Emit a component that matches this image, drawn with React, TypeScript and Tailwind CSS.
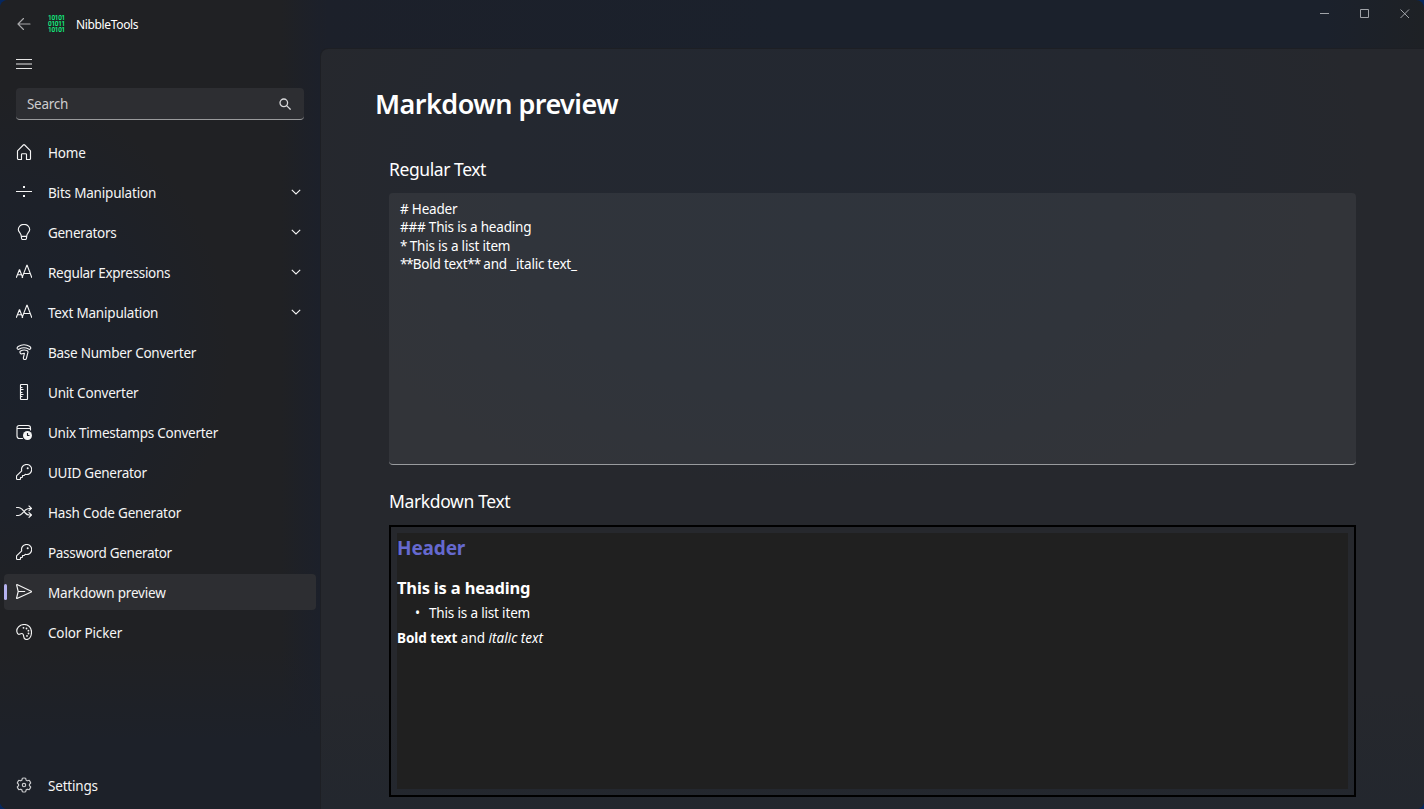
import React from "react";

type IconProps = { children: React.ReactNode; className?: string };

function Glyph({ children, className = "" }: IconProps) {
  return (
    <svg
      viewBox="0 0 16 16"
      className={`size-4 shrink-0 ${className}`}
      fill="none"
      stroke="currentColor"
      strokeWidth="1.15"
      strokeLinejoin="round"
      strokeLinecap="round"
    >
      {children}
    </svg>
  );
}

const HomeIcon = () => (
  <Glyph>
    <path d="M1.500 6.800 7.300 1a1 1 0 0 1 1.400 0l5.800 5.800v7.700a1 1 0 0 1-1 1h-3v-5a.8.8 0 0 0-.8-.8H6.300a.8.8 0 0 0-.8.8v5h-3a1 1 0 0 1-1-1z" />
  </Glyph>
);
const DivideIcon = () => (
  <Glyph>
    <path d="M0 7.500h16" strokeLinecap="butt" strokeWidth="1" />
    <path d="M7 2h2v2H7zM7 11h2v2H7z" fill="currentColor" stroke="none" />
  </Glyph>
);
const BulbIcon = () => (
  <Glyph>
    <path d="M5.300 12.300c0-1.600-.6-2.500-1.400-3.500C3 7.800 2.300 7.100 2.300 5.600a5.700 5.300 0 0 1 11.400 0c0 1.500-.7 2.200-1.600 3.200-.8 1-1.400 1.900-1.400 3.500zM5.300 12.300l.3 2.200a1.200 1.200 0 0 0 1.200 1h2.400a1.200 1.200 0 0 0 1.200-1l.3-2.200" />
  </Glyph>
);
const FontIcon = () => (
  <Glyph>
    <path
      d="M.4 13.400 3.500 5.500l3.100 7.900M1.500 10.700h4M6.200 13.400 11 .9l4.700 12.500M7.800 9.500h6.300"
      strokeLinejoin="bevel"
    />
  </Glyph>
);
const RadarIcon = () => (
  <Glyph>
    <path d="M1.300 4.800c-.4-.9 0-1.600.9-2.200 3.400-2.200 8.200-2.200 11.600 0 .9.600 1.200 1.400.700 2.200-.4.700-1.200.800-1.900.300-2.900-1.700-6.400-1.700-9.200 0-.8.500-1.700.4-2.100-.3z" />
    <path d="M4.200 8.900c-.5-.7-.3-1.500.4-1.900 2-1.100 4.200-1.300 6.300-.5.900.4 1.200 1 1 1.900l-1.500 6c-.3 1.200-1.700 1.400-2.500.8-.5-.4-.6-.9-.5-1.500l1-4.400c-.8-.1-1.400 0-2.200.4-.7.300-1.600.1-2-.8z" />
  </Glyph>
);
const RulerIcon = () => (
  <Glyph>
    <rect x="4.500" y=".5" width="7" height="15" rx=".7" />
    <path d="M4.500 3.500h2M4.500 5.500h3M4.500 8.500h2M4.500 10.500h3M4.500 12.500h2" strokeLinecap="butt" strokeWidth="1" />
  </Glyph>
);
const CalendarIcon = () => (
  <Glyph>
    <path d="M6.500 14.500H3.500A2.500 2.500 0 0 1 1 12V3.500A2 2 0 0 1 3 1.500h9a2.500 2.500 0 0 1 2.500 2.500v2M1 4.500h13.500" />
    <circle cx="11.500" cy="11.500" r="4.500" fill="currentColor" stroke="none" />
    <path d="M11.500 9v2.500h2" stroke="#1d2129" strokeLinecap="butt" />
  </Glyph>
);
const KeyIcon = () => (
  <Glyph>
    <path d="M10.500.5a5 5 0 0 0-4.800 6.300L.8 11.700a1 1 0 0 0-.3.700v2.100a1 1 0 0 0 1 1h2.100a1 1 0 0 0 .9-.9v-1.100h1.200a.8.800 0 0 0 .8-.8V11.500h1.200a1 1 0 0 0 .8-.4l.8-.8A5 5 0 1 0 10.500.500z" />
    <circle cx="11.700" cy="4.300" r="1" fill="currentColor" stroke="none" />
  </Glyph>
);
const ShuffleIcon = () => (
  <Glyph>
    <path d="M.5 3.500h1.800c1.600 0 2.500.6 3.700 1.700L9.300 9c1.100 1.300 2.200 2 3.900 2h2.300M.5 11.500h1.800c1.600 0 2.500-.6 3.700-1.900l3.300-3.400c1.200-1.200 2.200-1.700 3.900-1.700h2.300M13 2l2.500 2.300L13 6.600M13 8.700l2.500 2.300-2.500 2.300" />
  </Glyph>
);
const SendIcon = () => (
  <Glyph>
    <path d="M2.200 7.500.6.900a.3.300 0 0 1 .4-.3l14.300 6.600a.4.400 0 0 1 0 .7L1 14.500a.3.300 0 0 1-.4-.4zM2.200 7.500h6.500" />
  </Glyph>
);
const PaletteIcon = () => (
  <Glyph>
    <path d="M1 8.200C-.1 4.200 3.700.500 8.300.500c4.200 0 7.200 3.200 7.200 7.600 0 4.500-2.200 7.400-5 7.400-1.800 0-2.700-1.200-2.800-3-.1-1.900-.7-3-2-3-1.400 0-1.800.9-2.900.9C1.700 10.400 1.200 9.300 1 8.200z" />
    <g fill="currentColor" stroke="none">
      <circle cx="7.500" cy="3.800" r=".9" />
      <circle cx="10.500" cy="4.500" r=".9" />
      <circle cx="12.400" cy="6.700" r=".9" />
      <circle cx="12.500" cy="9.500" r=".9" />
      <circle cx="11" cy="11.900" r=".9" />
    </g>
  </Glyph>
);
const GearIcon = () => (
  <Glyph className="text-[#c9cacc]">
    <path d="M6.400 1.200A7 7 0 0 1 9.600 1.200L10.100 3.100a5 5 0 0 0 1.200.7l1.900-.5a7 7 0 0 1 1.500 2.700L13.400 7.400v1.300l1.300 1.300a7 7 0 0 1-1.500 2.700l-1.900-.5a5 5 0 0 1-1.200.7l-.5 1.900a7 7 0 0 1-3.200 0l-.5-1.900a5 5 0 0 1-1.200-.7l-1.900.5A7 7 0 0 1 1.300 10l1.300-1.300V7.400L1.300 6a7 7 0 0 1 1.500-2.700l1.900.5a5 5 0 0 1 1.200-.7z" />
    <circle cx="8" cy="8" r="1.700" />
  </Glyph>
);

function Chevron() {
  return (
    <svg
      viewBox="0 0 10 6"
      className="mr-[3px] h-1.5 w-2.5 shrink-0"
      fill="none"
      stroke="currentColor"
      strokeWidth="1.1"
    >
      <path d="M.8.800 5 5 9.200.800" />
    </svg>
  );
}

type NavEntry = { label: string; icon: React.ReactNode; track: string; group?: boolean; active?: boolean };

const entries: NavEntry[] = [
  { label: "Home", icon: <HomeIcon />, track: "tracking-[-0.15px]" },
  { label: "Bits Manipulation", icon: <DivideIcon />, track: "tracking-[-0.19px]", group: true },
  { label: "Generators", icon: <BulbIcon />, track: "tracking-[-0.3px]", group: true },
  { label: "Regular Expressions", icon: <FontIcon />, track: "tracking-[-0.31px]", group: true },
  { label: "Text Manipulation", icon: <FontIcon />, track: "tracking-[-0.2px]", group: true },
  { label: "Base Number Converter", icon: <RadarIcon />, track: "tracking-[-0.25px]" },
  { label: "Unit Converter", icon: <RulerIcon />, track: "tracking-[-0.2px]" },
  { label: "Unix Timestamps Converter", icon: <CalendarIcon />, track: "tracking-[-0.26px]" },
  { label: "UUID Generator", icon: <KeyIcon />, track: "tracking-[-0.27px]" },
  { label: "Hash Code Generator", icon: <ShuffleIcon />, track: "tracking-[-0.2px]" },
  { label: "Password Generator", icon: <KeyIcon />, track: "tracking-[-0.31px]" },
  { label: "Markdown preview", icon: <SendIcon />, track: "tracking-[-0.18px]", active: true },
  { label: "Color Picker", icon: <PaletteIcon />, track: "tracking-[-0.16px]" },
];

function NavItem({ label, icon, track, group, active }: NavEntry) {
  return (
    <div
      className={`relative flex h-9 items-center rounded px-3 text-[#f5f5f5] ${active ? "bg-[#2d2e32]" : ""}`}
    >
      {active && <span className="absolute top-2.5 left-0 h-4 w-[3px] rounded-full bg-[#b4b1ef]" />}
      {icon}
      <span className={`mt-0.5 ml-4 flex-1 whitespace-nowrap text-[13.5px] leading-5 ${track}`}>{label}</span>
      {group && <Chevron />}
    </div>
  );
}

function Logo() {
  return (
    <div className="flex w-[17px] flex-col font-['Roboto',sans-serif] text-[6.5px] leading-[6px] font-medium tracking-[-0.3px] text-[#10ff88]">
      <span>10101</span>
      <span>01011</span>
      <span>10101</span>
    </div>
  );
}

export default function App() {
  return (
    <div className="h-[809px] w-[1424px] overflow-hidden bg-[#06275e] font-['Noto_Sans','Open_Sans',sans-serif] text-white">
      <div className="flex h-full w-full overflow-hidden rounded-lg bg-[#1d2129] bg-[linear-gradient(90deg,#202124_0%,#202124_20%,#1c202a_23%,#1b212c_55%,#1b212c_93%,#1e2125_100%)]">
        <aside className="flex w-80 shrink-0 flex-col bg-[radial-gradient(ellipse_230px_260px_at_0px_350px,#1b212b_0%,#1d2129_60%,transparent_100%),linear-gradient(180deg,transparent_650px,#1d2129_740px),linear-gradient(90deg,#202124_88%,#1c202a_100%)]">
          <header className="flex h-12 shrink-0 items-center pl-4">
            <Glyph className="text-[#a7a8aa]">
              <path d="M7.500 2.500 2 8l5.500 5.500M2 8h12" />
            </Glyph>
            <div className="ml-4">
              <Logo />
            </div>
            <span className="mt-0.5 ml-[11px] text-[12px] tracking-[-0.35px]">NibbleTools</span>
          </header>
          <div className="flex h-8 shrink-0 items-center pl-4">
            <svg viewBox="0 0 16 12" className="h-3 w-4" stroke="#e5e5e5">
              <path d="M0 1.500h16M0 10.500h16" />
              <path d="M0 6h16" />
            </svg>
          </div>
          <div className="mx-4 mt-2 flex h-8 shrink-0 items-center overflow-hidden rounded border-b border-[#999a9c] bg-[#2d2e32] pr-3 pl-[11px]">
            <span className="mt-px flex-1 text-[13.5px] leading-5 tracking-[-0.3px] text-[#cdcdcf]">Search</span>
            <svg viewBox="0 0 12 12" className="mr-px size-3" fill="none" stroke="#d8d8da" strokeWidth="1.3">
              <circle cx="4.800" cy="4.800" r="3.800" />
              <path d="m7.600 7.600 4 4" />
            </svg>
          </div>
          <nav className="mt-3.5 mr-1 ml-1 flex flex-col gap-1">
            {entries.map((e) => (
              <NavItem key={e.label} {...e} />
            ))}
          </nav>
          <div className="mt-auto mb-1.5 ml-1">
            <NavItem label="Settings" icon={<GearIcon />} track="tracking-[-0.2px]" />
          </div>
        </aside>

        <div className="flex min-w-0 flex-1 flex-col">
          <div className="flex h-12 shrink-0 justify-end text-[#a0a3a8]">
            <svg viewBox="0 0 104 28" className="h-7 w-[104px]" fill="none" stroke="currentColor">
              <path d="M0 13.500h9M40.500 9.500h8v8h-8zM80.500 9.500l8.500 8.500M89 9.500 80.500 18" />
            </svg>
          </div>
          <main className="min-h-0 flex-1 rounded-tl-lg border-t border-l border-[#1d1f24] bg-[#26282d] bg-[linear-gradient(180deg,transparent_84%,#23272e_100%),radial-gradient(ellipse_550px_330px_at_500px_110px,#232831_0%,#242830_60%,transparent_100%)] pl-[54px]">
            <h1 className="mt-[35px] text-[27px] leading-10 font-semibold tracking-[-0.53px]">Markdown preview</h1>
            <div className="ml-3.5 w-[967px]">
              <h2 className="mt-[33px] text-[17.5px] leading-6 tracking-[-0.42px]">Regular Text</h2>
              <div className="mt-3 h-[272px] rounded border-b border-[#999b9e] bg-[#323439] bg-[radial-gradient(ellipse_500px_300px_at_430px_30px,#2f343c_0%,#30343b_60%,transparent_100%)] px-[11px] pt-[7px] text-[13.5px] leading-[18.4px] tracking-[-0.2px]">
                <p># Header</p>
                <p>### This is a heading</p>
                <p>
                  <span className="tracking-[-1px]">*</span> This is a list item
                </p>
                <p>
                  <span className="tracking-[-1.1px]">**</span>Bold text
                  <span className="tracking-[-1.1px]">**</span> and _italic text_
                </p>
              </div>
              <h2 className="mt-6 text-[17.5px] leading-6 tracking-[-0.36px]">Markdown Text</h2>
              <div className="mt-3 h-[272px] border-2 border-black p-1.5">
                <div className="h-full bg-[#202020] text-[13.5px] leading-5">
                  <h3 className="pt-0.5 text-[19px] leading-[26px] font-bold tracking-[-0.15px] text-[#6569cf]">
                    Header
                  </h3>
                  <h4 className="mt-[15px] text-[16.5px] leading-6 font-bold tracking-[-0.18px]">This is a heading</h4>
                  <p className="mt-[3px] flex">
                    <span className="w-8 pl-[18px]">•</span>
                    <span className="tracking-[-0.17px]">This is a list item</span>
                  </p>
                  <p className="mt-[5px]">
                    <b className="tracking-[-0.05px]">Bold text</b> and <i>italic text</i>
                  </p>
                </div>
              </div>
            </div>
          </main>
        </div>
      </div>
    </div>
  );
}
